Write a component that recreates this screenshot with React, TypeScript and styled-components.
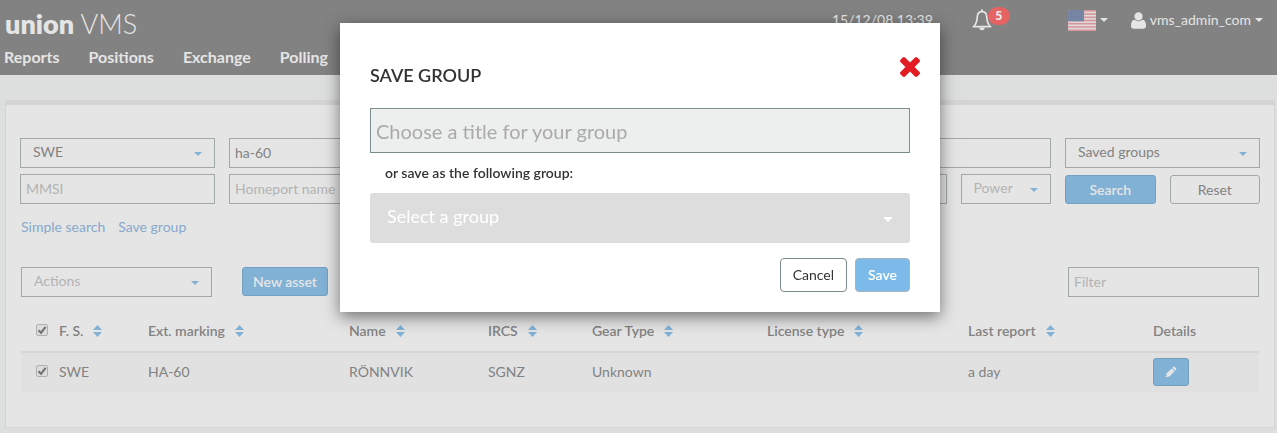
import React from "react";
import styled, { createGlobalStyle, css } from "styled-components";

const GlobalStyle = createGlobalStyle`
  *, *::before, *::after { box-sizing: border-box; }
  body {
    margin: 0;
    background: #dcdfde;
    color: #828282;
    font: 14px/20px Lato, "Liberation Sans", sans-serif;
  }
  button, input, select { font: inherit; color: inherit; margin: 0; }
`;

/* ---------- header ---------- */

const Header = styled.header`
  display: flex;
  justify-content: space-between;
  height: 75px;
  background: #828282;
  color: #e5e5e5;
`;

const Brand = styled.a`
  display: block;
  padding: 7px 5px 0;
  color: inherit;
  font-size: 27px;
  line-height: 34px;
  font-weight: 300;
  text-decoration: none;

  strong { font-weight: 800; }
`;

const Nav = styled.nav`
  display: flex;
  gap: 29px;
  padding: 6px 4px 0;

  a {
    color: inherit;
    font-size: 16px;
    line-height: 20px;
    font-weight: 700;
    text-decoration: none;
  }
`;

const HeaderTools = styled.div`
  display: flex;
  align-items: center;
  height: 40px;
  padding-right: 14px;
`;

const Clock = styled.time`
  margin-right: 39px;
  line-height: 40px;
`;

const ToolButton = styled.button`
  display: flex;
  align-items: center;
  gap: 4px;
  padding: 0;
  border: 0;
  background: none;
`;

const BellButton = styled(ToolButton)`
  position: relative;
  width: 38px;
  height: 30px;
  margin-right: 58px;
`;

const Badge = styled.span`
  position: absolute;
  top: 2px;
  right: 0;
  width: 22px;
  height: 18px;
  border-radius: 9px;
  background: #e56363;
  font: 700 12px/17px "Open Sans", sans-serif;
  text-align: center;
`;

const FlagButton = styled(ToolButton)`
  margin-right: 23px;
`;

const Caret = styled.span<{ $color?: string }>`
  border: 4px solid transparent;
  border-top-color: ${(p) => p.$color ?? "currentColor"};
  border-bottom: 0;
`;

/* ---------- form parts ---------- */

const boxStyle = css`
  width: 100%;
  height: 30px;
  border: 1px solid #a0a9a7;
  border-radius: 0;
  background: transparent;
  outline: 0;
`;

const TextInput = styled.input`
  ${boxStyle}
  padding: 0 5px 2px;
  &::placeholder { color: #b3b3b3; opacity: 1; }
`;

const SelectWrap = styled.div`
  position: relative;
`;

const SelectBox = styled.select<{ $muted?: boolean }>`
  ${boxStyle}
  appearance: none;
  padding: 0 24px 2px 12px;
  ${(p) => p.$muted && "color: #b3b3b3;"}
`;

const SelectCaret = styled(Caret)`
  position: absolute;
  top: 14px;
  right: 13px;
  pointer-events: none;
`;

const Button = styled.button<{ $primary?: boolean }>`
  height: 29px;
  padding: 0 10px;
  border: 1px solid ${(p) => (p.$primary ? "#74a0bf" : "#a0a9a7")};
  border-radius: 3px;
  background: ${(p) => (p.$primary ? "#81b2d5" : "transparent")};
  color: ${(p) => (p.$primary ? "#e5e5e5" : "#828282")};
  font-weight: ${(p) => (p.$primary ? 600 : 400)};
`;

/* ---------- panel ---------- */

const Panel = styled.main`
  margin: 25px 2px 5px 5px;
  padding: 33px 14px 35px;
  border: 1px solid #d4d4d4;
  border-top-width: 5px;
  background: #e5e5e5;
`;

const SearchGrid = styled.form`
  display: grid;
  grid-template-columns: repeat(12, minmax(0, 1fr));
  align-items: end;
  gap: 6px 14px;
`;

const Cell = styled.div<{ $span: number }>`
  display: grid;
  grid-column: span ${(p) => p.$span};
`;

const Links = styled.div`
  display: flex;
  gap: 13px;
  padding: 13px 1px 0;

  a { color: #86a9cc; text-decoration: none; }
`;

const Toolbar = styled.div`
  display: grid;
  grid-template-columns: 191px auto 1fr 191px;
  gap: 30px;
  padding: 30px 1px 0;
`;

const FilterCell = styled.div`
  grid-column: 4;
`;

const TableArea = styled.div`
  padding: 14px 1px 0;
`;

const Table = styled.table`
  width: 100%;
  table-layout: fixed;
  border-collapse: collapse;

  th, td { padding: 0 8px; text-align: left; white-space: nowrap; }
  th { height: 41px; border-bottom: 2px solid #d6d6d6; font-weight: 600; }
  td { height: 40px; padding-bottom: 2px; background: #e1e1e1; }
  th:first-child, td:first-child { padding: 0 0 3px 15px; }
`;

const Tick = styled.input`
  appearance: none;
  display: block;
  width: 12px;
  height: 12px;
  border: 1px solid #b0b0b0;
  border-radius: 2px;
  background: #dcdcdc;
`;

const TickLabel = styled.label`
  position: relative;
  display: block;
  width: 12px;

  svg { position: absolute; top: 1px; left: 1px; pointer-events: none; }
`;

const SortLabel = styled.span`
  display: flex;
  align-items: center;
  gap: 10px;
`;

const EditButton = styled(Button)`
  display: grid;
  place-items: center;
  width: 36px;
  height: 28px;
  padding: 0;
`;

/* ---------- dialog ---------- */

const Overlay = styled.div`
  position: fixed;
  inset: 0;
  display: flex;
  justify-content: center;
  align-items: flex-start;
  padding: 23px 0 0 3px;
`;

const Dialog = styled.section`
  width: 600px;
  padding: 30px 30px 20px;
  background: #fff;
  color: #333;
  box-shadow: 0 5px 15px rgba(0, 0, 0, 0.5);
`;

const DialogHeader = styled.div`
  display: flex;
  justify-content: space-between;
  align-items: flex-start;
  height: 55px;

  h2 {
    margin: 12px 0 0;
    font-size: 18px;
    line-height: 20px;
    font-weight: 600;
  }
`;

const CloseButton = styled.button`
  display: block;
  margin: 4px -10px 0 0;
  padding: 0;
  border: 0;
  background: none;

  svg { display: block; }
`;

const TitleInput = styled(TextInput)`
  height: 45px;
  border-color: #7b8d8a;
  background: #ecefee;
  font-size: 20px;
  padding: 0 5px;
  &::placeholder { color: #aaa; }
`;

const GroupLabel = styled.label`
  display: block;
  padding: 10px 15px;
  font-weight: 600;
`;

const GroupSelect = styled(SelectBox)`
  height: 50px;
  padding: 0 40px 4px 17px;
  border: 0;
  border-radius: 3px;
  background: #ddd;
  color: #fff;
  font-size: 18px;
`;

const GroupCaret = styled(Caret)`
  position: absolute;
  top: 24px;
  right: 17px;
  border-width: 5px 5px 0;
  pointer-events: none;
`;

const Actions = styled.div`
  display: flex;
  justify-content: flex-end;
  gap: 8px;
  padding-top: 15px;
`;

const DialogButton = styled(Button)`
  height: 34px;
  padding: 0 12px;
  border-radius: 4px;
  border-color: ${(p) => (p.$primary ? "#a8b4bb" : "#7b8d8a")};
  background: ${(p) => (p.$primary ? "#7cbbe9" : "#fff")};
  color: ${(p) => (p.$primary ? "#fff" : "#333")};
`;

/* ---------- icons ---------- */

const BellIcon = () => (
  <svg width="20" height="22" viewBox="0 0 20 22" fill="none" stroke="currentColor" strokeWidth="1.7" aria-hidden="true">
    <path d="M10 2.6C6.8 2.6 5.300 5 5.200 8.200C5.100 12.500 4 15.500 1.400 17.700H18.600C16 15.500 14.900 12.500 14.800 8.200C14.700 5 13.200 2.600 10 2.600Z" strokeLinejoin="round" />
    <path d="M10 .5V2.500" strokeWidth="2" />
    <path d="M7.300 18.500a2.700 2.700 0 0 0 5.400 0z" fill="currentColor" stroke="none" />
  </svg>
);

const FlagIcon = () => (
  <svg width="28" height="21" viewBox="0 0 28 21" aria-hidden="true">
    <clipPath id="flag"><rect width="28" height="21" rx="2" /></clipPath>
    <g clipPath="url(#flag)">
      <rect width="28" height="21" fill="#dedcdc" />
      {[0, 1, 2, 3, 4, 5, 6].map((i) => (
        <rect key={i} y={i * 3.23} width="28" height="1.62" fill="#d99598" />
      ))}
      <rect width="16" height="11.300" fill="#7482a2" />
      {[0, 1, 2, 3, 4].map((r) =>
        [0, 1, 2, 3, 4, 5].map((c) => (
          <circle key={`${r}${c}`} cx={1.6 + c * 2.6} cy={1.4 + r * 2.1} r=".45" fill="#9aa5bb" />
        ))
      )}
    </g>
  </svg>
);

const UserIcon = () => (
  <svg width="15" height="17" viewBox="0 0 1408 1536" fill="currentColor" aria-hidden="true">
    <path d="M1408 1277q0 120-73 189.500t-194 69.500h-874q-121 0-194-69.500t-73-189.500q0-53 3.500-103.500t14-109 26.500-108.500 43-97.500 62-81 85.500-53.500 111.500-20q9 0 42 21.500t74.500 48 108 48 133.500 21.500 133.500-21.500 108-48 74.500-48 42-21.500q61 0 111.500 20t85.500 53.500 62 81 43 97.500 26.500 108.500 14 109 3.500 103.500zM1088 384q0 159-112.500 271.500t-271.500 112.500-271.500-112.500-112.500-271.500 112.500-271.500 271.500-112.500 271.500 112.500 112.500 271.500z" />
  </svg>
);

const TimesIcon = () => (
  <svg width="20" height="20" viewBox="302 366 1188 1188" fill="#e31b23" aria-hidden="true">
    <path d="M1490 1322q0 40-28 68l-136 136q-28 28-68 28t-68-28l-294-294-294 294q-28 28-68 28t-68-28l-136-136q-28-28-28-68t28-68l294-294-294-294q-28-28-28-68t28-68l136-136q28-28 68-28t68 28l294 294 294-294q28-28 68-28t68 28l136 136q28 28 28 68t-28 68l-294 294 294 294q28 28 28 68z" />
  </svg>
);

const PencilIcon = () => (
  <svg width="12" height="12" viewBox="0 0 12 12" fill="currentColor" aria-hidden="true">
    <path d="M.8 11.200L1.500 7.600L6.700 2.400L9.600 5.300L4.400 10.500Z" />
    <path d="M7.300 1.800L8.200 .9Q9 .3 9.800 1L11 2.200Q11.700 3 11.100 3.800L10.200 4.700Z" />
    <path d="M1.600 9.400L2.600 10.400" stroke="#81b2d5" strokeWidth=".8" />
  </svg>
);

const SortIcon = () => (
  <svg width="9" height="12" viewBox="0 0 9 12" fill="#81b2d5" aria-hidden="true">
    <path d="M4.500 0L9 5H0zM4.500 12L0 7H9z" />
  </svg>
);

const CheckIcon = () => (
  <svg width="10" height="10" viewBox="0 0 10 10" fill="none" stroke="#747474" strokeWidth="2.200" aria-hidden="true">
    <path d="M1.500 5.300L4 7.800L8.600 1.800" />
  </svg>
);

/* ---------- composed controls ---------- */

function Select({ label, value, muted }: { label: string; value: string; muted?: boolean }) {
  return (
    <SelectWrap>
      <SelectBox aria-label={label} $muted={muted}>
        <option>{value}</option>
      </SelectBox>
      <SelectCaret $color="#81b2d5" />
    </SelectWrap>
  );
}

function Checkbox({ label }: { label: string }) {
  return (
    <TickLabel>
      <Tick type="checkbox" defaultChecked aria-label={label} />
      <CheckIcon />
    </TickLabel>
  );
}

const columns = [
  { title: "F. S.", width: 89 },
  { title: "Ext. marking", width: 201 },
  { title: "Name", width: 139 },
  { title: "IRCS", width: 104 },
  { title: "Gear Type", width: 175 },
  { title: "License type", width: 201 },
  { title: "Last report", width: 185 },
];

const assets = [["SWE", "HA-60", "RÖNNVIK", "SGNZ", "Unknown", "", "a day"]];

export default function App() {
  return (
    <>
      <GlobalStyle />
      <Header>
        <div>
          <Brand href="#"><strong>union</strong> VMS</Brand>
          <Nav>
            <a href="#reports">Reports</a>
            <a href="#positions">Positions</a>
            <a href="#exchange">Exchange</a>
            <a href="#polling">Polling</a>
          </Nav>
        </div>
        <HeaderTools>
          <Clock>15/12/08 13:39</Clock>
          <BellButton aria-label="Notifications">
            <BellIcon />
            <Badge>5</Badge>
          </BellButton>
          <FlagButton aria-label="Language">
            <FlagIcon />
            <Caret />
          </FlagButton>
          <ToolButton>
            <UserIcon />
            vms_admin_com
            <Caret />
          </ToolButton>
        </HeaderTools>
      </Header>

      <Panel>
        <SearchGrid onSubmit={(e) => e.preventDefault()}>
          <Cell $span={2}><Select label="Flag state" value="SWE" /></Cell>
          <Cell $span={2}><TextInput aria-label="External marking" defaultValue="ha-60" /></Cell>
          <Cell $span={2}><TextInput aria-label="Name" /></Cell>
          <Cell $span={2}><TextInput aria-label="IRCS" /></Cell>
          <Cell $span={2}><TextInput aria-label="CFR" /></Cell>
          <Cell $span={2}><Select label="Saved groups" value="Saved groups" /></Cell>

          <Cell $span={2}><TextInput aria-label="MMSI" placeholder="MMSI" /></Cell>
          <Cell $span={2}><TextInput aria-label="Homeport name" placeholder="Homeport name" /></Cell>
          <Cell $span={2}><TextInput aria-label="Gear type" /></Cell>
          <Cell $span={2}><TextInput aria-label="License type" /></Cell>
          <Cell $span={1}><TextInput aria-label="Length" /></Cell>
          <Cell $span={1}><Select label="Power" value="Power" muted /></Cell>
          <Cell $span={1}><Button type="submit" $primary>Search</Button></Cell>
          <Cell $span={1}><Button type="reset">Reset</Button></Cell>
        </SearchGrid>

        <Links>
          <a href="#simple">Simple search</a>
          <a href="#save">Save group</a>
        </Links>

        <Toolbar>
          <Select label="Actions" value="Actions" muted />
          <Button $primary>New asset</Button>
          <FilterCell><TextInput aria-label="Filter" placeholder="Filter" /></FilterCell>
        </Toolbar>

        <TableArea>
          <Table>
            <colgroup>
              <col width={30} />
              {columns.map((c) => <col key={c.title} width={c.width} />)}
              <col width={114} />
            </colgroup>
            <thead>
              <tr>
                <th><Checkbox label="Select all" /></th>
                {columns.map((c) => (
                  <th key={c.title}><SortLabel>{c.title}<SortIcon /></SortLabel></th>
                ))}
                <th>Details</th>
              </tr>
            </thead>
            <tbody>
              {assets.map((row) => (
                <tr key={row[1]}>
                  <td><Checkbox label={`Select ${row[2]}`} /></td>
                  {row.map((value, i) => <td key={i}>{value}</td>)}
                  <td><EditButton $primary aria-label="Edit"><PencilIcon /></EditButton></td>
                </tr>
              ))}
            </tbody>
          </Table>
        </TableArea>
      </Panel>

      <Overlay>
        <Dialog role="dialog" aria-labelledby="dialog-title">
          <DialogHeader>
            <h2 id="dialog-title">SAVE GROUP</h2>
            <CloseButton aria-label="Close"><TimesIcon /></CloseButton>
          </DialogHeader>
          <TitleInput aria-label="Group title" placeholder="Choose a title for your group" />
          <GroupLabel htmlFor="group">or save as the following group:</GroupLabel>
          <SelectWrap>
            <GroupSelect id="group"><option>Select a group</option></GroupSelect>
            <GroupCaret $color="#fff" />
          </SelectWrap>
          <Actions>
            <DialogButton>Cancel</DialogButton>
            <DialogButton $primary>Save</DialogButton>
          </Actions>
        </Dialog>
      </Overlay>
    </>
  );
}
